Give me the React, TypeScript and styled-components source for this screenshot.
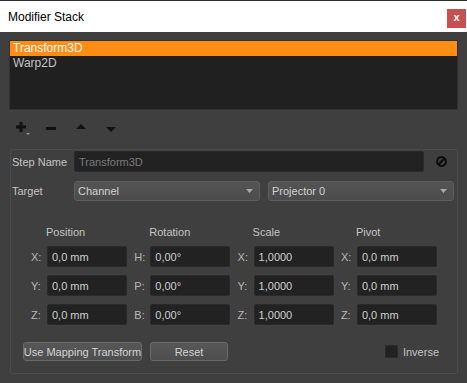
import React from "react";
import styled, { createGlobalStyle } from "styled-components";

const GlobalStyle = createGlobalStyle`
  html, body {
    margin: 0;
    padding: 0;
    background: #3f3f3f;
  }
  * {
    box-sizing: border-box;
  }
`;

const Window = styled.div`
  width: 467px;
  height: 383px;
  background: #3f3f3f;
  border-top: 1px solid #2d2d2d;
  font-family: "Liberation Sans", Arial, sans-serif;
  font-size: 11px;
  color: #c4c4c4;
  display: flex;
  flex-direction: column;
  overflow: hidden;
  white-space: nowrap;
`;

const TitleBar = styled.div`
  height: 31px;
  background: #ffffff;
  display: flex;
  align-items: center;
  justify-content: space-between;
  padding-left: 8px;
  padding-right: 1px;
  flex-shrink: 0;
`;

const Title = styled.span`
  font-size: 12px;
  color: #000;
  margin-top: 1px;
`;

const CloseButton = styled.div`
  width: 19px;
  height: 19px;
  margin-top: 3px;
  background: #c75050;
  color: #fff;
  font-weight: bold;
  font-size: 11px;
  display: flex;
  align-items: center;
  justify-content: center;
  line-height: 1;
  padding-bottom: 2px;
`;

const Body = styled.div`
  flex: 1;
  padding: 8px 9px 0 9px;
  display: flex;
  flex-direction: column;
`;

const StackList = styled.div`
  height: 70px;
  width: 449px;
  background: #202020;
  border: 1px solid #323232;
  display: flex;
  flex-direction: column;
`;

const StackItem = styled.div<{ $selected?: boolean }>`
  height: 15px;
  line-height: 15px;
  padding-left: 3px;
  font-size: 12px;
  background: ${(p) => (p.$selected ? "#ff8c14" : "transparent")};
  color: ${(p) => (p.$selected ? "#ffffff" : "#c4c4c4")};
`;

const Toolbar = styled.div`
  height: 39px;
  display: flex;
  align-items: center;
  padding-left: 7px;
  padding-bottom: 2px;
`;

const ToolButton = styled.div`
  width: 30px;
  height: 20px;
  display: flex;
  align-items: center;
  justify-content: flex-start;
`;

const GroupBox = styled.div`
  margin-left: 1px;
  width: 448px;
  height: 225px;
  border: 1px solid #4b4b4b;
  border-radius: 2px;
  padding: 1px 2px 0 1px;
  display: flex;
  flex-direction: column;
`;

const FieldRow = styled.div<{ $height: number; $top?: number }>`
  display: flex;
  align-items: center;
  height: ${(p) => p.$height}px;
  margin-top: ${(p) => p.$top ?? 0}px;
`;

const FieldLabel = styled.span`
  width: 62px;
  flex-shrink: 0;
`;

const TextInput = styled.div<{ $disabled?: boolean; $width: number }>`
  width: ${(p) => p.$width}px;
  height: 21px;
  background: #222222;
  border: 1px solid #2a2a2a;
  border-radius: 2px;
  color: ${(p) => (p.$disabled ? "#7a7a7a" : "#d0d0d0")};
  display: flex;
  align-items: center;
  padding-left: 4px;
  font-size: 11px;
`;

const ClearIcon = styled.div`
  margin-left: 12px;
  width: 11px;
  height: 11px;
  display: flex;
`;

const Combo = styled.div`
  width: 186px;
  height: 20px;
  border: 1px solid #5e5e5e;
  border-radius: 3px;
  background: linear-gradient(#545454, #4c4c4c);
  color: #d2d2d2;
  display: flex;
  align-items: center;
  justify-content: space-between;
  padding: 0 6px 0 3px;
  & + & {
    margin-left: 8px;
  }
`;

const TransformGrid = styled.div`
  display: flex;
  gap: 7.3px;
  padding-left: 19px;
  margin-top: 26px;
`;

const Column = styled.div`
  display: grid;
  grid-template-columns: 16px 80px;
  grid-template-rows: 11px repeat(3, 21px);
  row-gap: 8px;
  align-items: center;
`;

const ColumnHeader = styled.span`
  grid-column: 2;
  margin-left: -1px;
  line-height: 11px;
`;

const AxisLabel = styled.span`
  color: #b8b8b8;
`;

const Footer = styled.div`
  display: flex;
  align-items: center;
  margin-top: 17px;
  padding-left: 11px;
  padding-right: 16px;
`;

const PushButton = styled.div<{ $width: number }>`
  width: ${(p) => p.$width}px;
  height: 19px;
  border: 1px solid #6a6a6a;
  border-radius: 3px;
  background: linear-gradient(#575757, #4e4e4e);
  color: #d4d4d4;
  display: flex;
  align-items: center;
  justify-content: center;
  & + & {
    margin-left: 8px;
  }
`;

const CheckArea = styled.label`
  margin-left: auto;
  display: flex;
  align-items: center;
  gap: 5px;
`;

const CheckBox = styled.span`
  width: 13px;
  height: 13px;
  background: #222222;
  border: 1px solid #2c2c2c;
`;

const Arrow = () => (
  <svg width="7" height="4" viewBox="0 0 7 4">
    <path d="M0 0 H7 L3.5 4 Z" fill="#a8a8a8" />
  </svg>
);

type Axis = { axis: string; value: string };

const columns: { title: string; rows: Axis[] }[] = [
  {
    title: "Position",
    rows: [
      { axis: "X:", value: "0,0 mm" },
      { axis: "Y:", value: "0,0 mm" },
      { axis: "Z:", value: "0,0 mm" },
    ],
  },
  {
    title: "Rotation",
    rows: [
      { axis: "H:", value: "0,00°" },
      { axis: "P:", value: "0,00°" },
      { axis: "B:", value: "0,00°" },
    ],
  },
  {
    title: "Scale",
    rows: [
      { axis: "X:", value: "1,0000" },
      { axis: "Y:", value: "1,0000" },
      { axis: "Z:", value: "1,0000" },
    ],
  },
  {
    title: "Pivot",
    rows: [
      { axis: "X:", value: "0,0 mm" },
      { axis: "Y:", value: "0,0 mm" },
      { axis: "Z:", value: "0,0 mm" },
    ],
  },
];

export default function App() {
  return (
    <>
      <GlobalStyle />
      <Window>
        <TitleBar>
          <Title>Modifier Stack</Title>
          <CloseButton>x</CloseButton>
        </TitleBar>
        <Body>
          <StackList>
            <StackItem $selected>Transform3D</StackItem>
            <StackItem>Warp2D</StackItem>
          </StackList>

          <Toolbar>
            <ToolButton>
              <svg width="16" height="14" viewBox="0 0 16 14">
                <path d="M3.5 0 h3 v3.5 h3.5 v3 h-3.5 v3.5 h-3 v-3.5 h-3.5 v-3 h3.5 Z" fill="#111" />
                <path d="M10 11 h4 l-2 2 Z" fill="#9a9a9a" />
              </svg>
            </ToolButton>
            <ToolButton>
              <svg width="10" height="3" viewBox="0 0 10 3">
                <rect width="10" height="3" fill="#111" />
              </svg>
            </ToolButton>
            <ToolButton>
              <svg width="10" height="6" viewBox="0 0 10 6" style={{ marginTop: -3 }}>
                <path d="M0 5 L5 0 L10 5 Z" fill="#111" />
              </svg>
            </ToolButton>
            <ToolButton>
              <svg width="10" height="6" viewBox="0 0 10 6" style={{ marginTop: 2 }}>
                <path d="M0 0 L10 0 L5 5 Z" fill="#111" />
              </svg>
            </ToolButton>
          </Toolbar>

          <GroupBox>
            <FieldRow $height={21}>
              <FieldLabel>Step Name</FieldLabel>
              <TextInput $disabled $width={350}>
                Transform3D
              </TextInput>
              <ClearIcon>
                <svg width="11" height="11" viewBox="0 0 11 11">
                  <circle cx="5.5" cy="5.5" r="4.4" fill="none" stroke="#0a0a0a" strokeWidth="2" />
                  <path d="M8.3 2.7 L2.7 8.3" stroke="#0a0a0a" strokeWidth="2" />
                </svg>
              </ClearIcon>
            </FieldRow>
            <FieldRow $height={20} $top={9}>
              <FieldLabel>Target</FieldLabel>
              <Combo>
                <span>Channel</span>
                <Arrow />
              </Combo>
              <Combo>
                <span>Projector 0</span>
                <Arrow />
              </Combo>
            </FieldRow>

            <TransformGrid>
              {columns.map((col) => (
                <Column key={col.title}>
                  <ColumnHeader>{col.title}</ColumnHeader>
                  {col.rows.map((r) => (
                    <React.Fragment key={r.axis}>
                      <AxisLabel>{r.axis}</AxisLabel>
                      <TextInput $width={80}>{r.value}</TextInput>
                    </React.Fragment>
                  ))}
                </Column>
              ))}
            </TransformGrid>

            <Footer>
              <PushButton $width={119}>Use Mapping Transform</PushButton>
              <PushButton $width={78}>Reset</PushButton>
              <CheckArea>
                <CheckBox />
                <span>Inverse</span>
              </CheckArea>
            </Footer>
          </GroupBox>
        </Body>
      </Window>
    </>
  );
}
